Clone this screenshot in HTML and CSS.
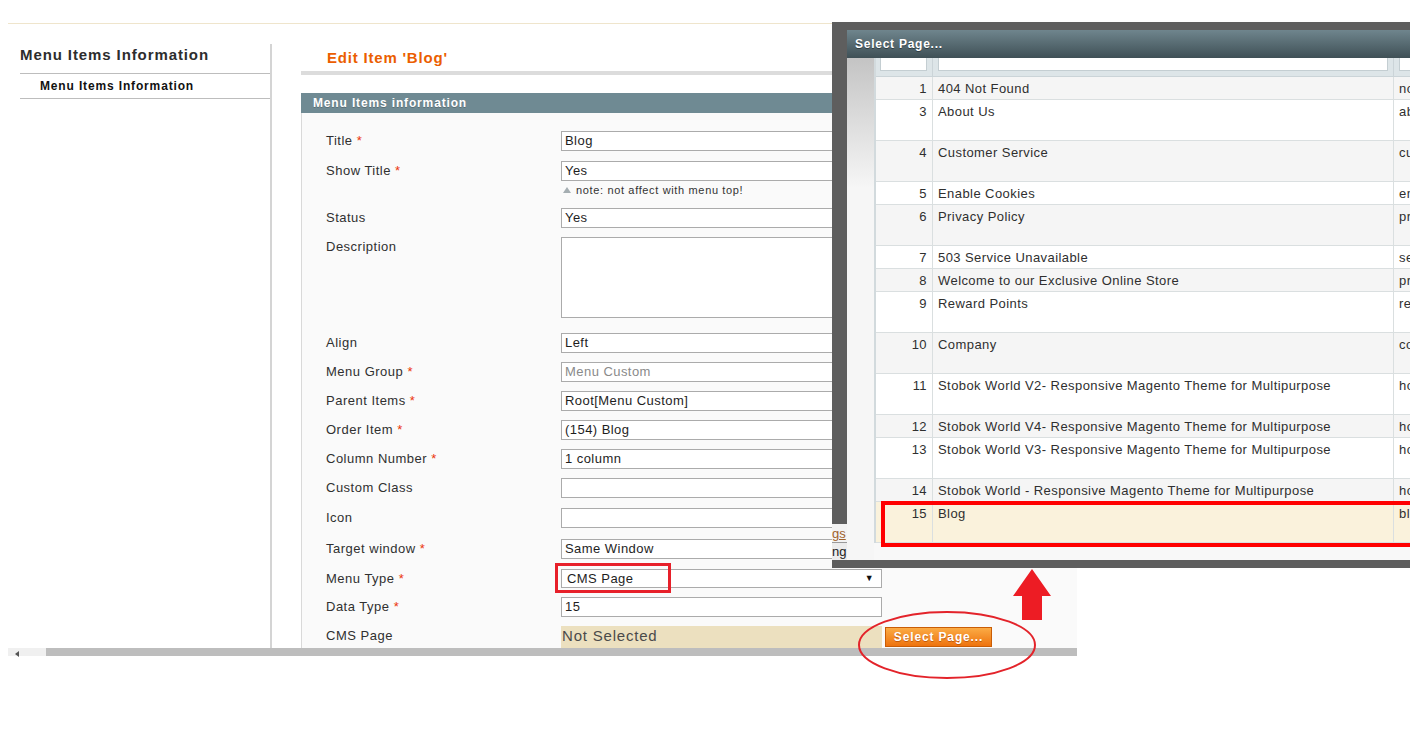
FILE: index.html
```html
<!DOCTYPE html>
<html>
<head>
<meta charset="utf-8">
<title>Edit Item 'Blog'</title>
<link rel="stylesheet" href="styles.css">
</head>
<body>
<div class="topline"></div>
<div class="layout">
  <aside class="sidebar">
    <h3 class="side-title">Menu Items Information</h3>
    <div class="side-item">Menu Items Information</div>
  </aside>
  <main class="content">
    <div class="page-head"><h2>Edit Item 'Blog'</h2></div>
    <div class="section-head">Menu Items information</div>
    <div class="fieldset">
      <div class="row gap10"><label>Title <span class="req">*</span></label><div class="field"><div class="input">Blog</div></div></div>
      <div class="row"><label>Show Title <span class="req">*</span></label><div class="field"><div class="input">Yes</div><div class="note"><span class="tri"></span>note: not affect with menu top!</div></div></div>
      <div class="row"><label>Status</label><div class="field"><div class="input">Yes</div></div></div>
      <div class="row gap15"><label>Description</label><div class="field"><div class="input area"></div></div></div>
      <div class="row"><label>Align</label><div class="field"><div class="input">Left</div></div></div>
      <div class="row"><label>Menu Group <span class="req">*</span></label><div class="field"><div class="input muted">Menu Custom</div></div></div>
      <div class="row"><label>Parent Items <span class="req">*</span></label><div class="field"><div class="input">Root[Menu Custom]</div></div></div>
      <div class="row"><label>Order Item <span class="req">*</span></label><div class="field"><div class="input">(154) Blog</div></div></div>
      <div class="row"><label>Column Number <span class="req">*</span></label><div class="field"><div class="input">1 column</div></div></div>
      <div class="row gap10"><label>Custom Class</label><div class="field"><div class="input"></div></div></div>
      <div class="row gap11"><label>Icon</label><div class="field"><div class="input"></div></div></div>
      <div class="row gap10"><label>Target window <span class="req">*</span></label><div class="field"><div class="input">Same Window</div></div></div>
      <div class="row"><label>Menu Type <span class="req">*</span></label><div class="field"><div class="input select">CMS Page<span class="caret">&#9660;</span></div></div></div>
      <div class="row"><label>Data Type <span class="req">*</span></label><div class="field"><div class="input">15</div></div></div>
      <div class="row"><label>CMS Page</label><div class="field cms"><div class="notsel">Not Selected</div><div class="btn">Select Page...</div></div></div>
    </div>
  </main>
</div>
<div class="hscroll"><div class="hs-btn"><span class="hs-tri"></span></div><div class="hs-bar"></div></div>

<div class="modal">
  <div class="modal-head">Select Page...</div>
  <div class="modal-body">
    <div class="modal-side"></div>
    <div class="grid">
      <div class="filter">
        <div class="gid"><span class="fbox"></span></div>
        <div class="gtitle"><span class="fbox"></span></div>
        <div class="gurl"><span class="fbox"></span></div>
      </div>
      <div class="grow odd"><div class="gid">1</div><div class="gtitle">404 Not Found</div><div class="gurl">no-route</div></div>
      <div class="grow tall"><div class="gid">3</div><div class="gtitle">About Us</div><div class="gurl">about-magento-demo-store</div></div>
      <div class="grow tall odd"><div class="gid">4</div><div class="gtitle">Customer Service</div><div class="gurl">customer-service</div></div>
      <div class="grow"><div class="gid">5</div><div class="gtitle">Enable Cookies</div><div class="gurl">enable-cookies</div></div>
      <div class="grow tall odd"><div class="gid">6</div><div class="gtitle">Privacy Policy</div><div class="gurl">privacy-policy-cookie-restriction-mode</div></div>
      <div class="grow"><div class="gid">7</div><div class="gtitle">503 Service Unavailable</div><div class="gurl">service-unavailable</div></div>
      <div class="grow odd"><div class="gid">8</div><div class="gtitle">Welcome to our Exclusive Online Store</div><div class="gurl">private-sales</div></div>
      <div class="grow tall"><div class="gid">9</div><div class="gtitle">Reward Points</div><div class="gurl">reward-points</div></div>
      <div class="grow tall odd"><div class="gid">10</div><div class="gtitle">Company</div><div class="gurl">company</div></div>
      <div class="grow tall"><div class="gid">11</div><div class="gtitle">Stobok World V2- Responsive Magento Theme for Multipurpose</div><div class="gurl">home-v2</div></div>
      <div class="grow odd"><div class="gid">12</div><div class="gtitle">Stobok World V4- Responsive Magento Theme for Multipurpose</div><div class="gurl">home-v4</div></div>
      <div class="grow tall"><div class="gid">13</div><div class="gtitle">Stobok World V3- Responsive Magento Theme for Multipurpose</div><div class="gurl">home-v3</div></div>
      <div class="grow odd"><div class="gid">14</div><div class="gtitle">Stobok World - Responsive Magento Theme for Multipurpose</div><div class="gurl">home</div></div>
      <div class="grow tall picked"><div class="gid">15</div><div class="gtitle">Blog</div><div class="gurl">blog</div></div>
    </div>
  </div>
</div>

<div class="peek"><div class="peek-link">gs</div><div class="peek-text">ng</div></div>
<div class="mark mark-row"></div>
<div class="mark mark-type"></div>
<svg class="arrow" width="39" height="51" viewBox="0 0 39 51"><polygon points="19,0 38,27 29,27 29,51 9,51 9,27 0,27" fill="#ed1c24"/></svg>
<svg class="ring" width="182" height="72" viewBox="0 0 182 72"><ellipse cx="91" cy="35" rx="88" ry="33" fill="none" stroke="#e3232a" stroke-width="2"/></svg>
</body>
</html>
```
FILE: styles.css
```css
* { box-sizing: border-box; }
html, body { margin: 0; padding: 0; overflow: hidden; }
body {
  width: 1410px;
  height: 754px;
  background: #fff;
  position: relative;
  font-family: "Liberation Sans", Arial, sans-serif;
  color: #2f2f2f;
}

.topline { margin: 23px 0 0 8px; height: 1px; background: #efe5cc; }

.layout { display: flex; margin: 20px 0 0 8px; height: 604px; overflow: hidden; }

.sidebar { flex: none; width: 264px; padding-left: 12px; border-right: 2px solid #d4d4d4; }
.side-title {
  margin: 0; height: 30px; border-bottom: 1px solid #bdbdbd;
  font-size: 15px; font-weight: bold; line-height: 21px; color: #2d2d2d; letter-spacing: 0.9px;
}
.side-item {
  height: 25px; padding-left: 20px; border-bottom: 1px solid #bdbdbd;
  font-size: 12px; font-weight: bold; line-height: 24px; color: #111; letter-spacing: 0.85px;
}

.content { flex: none; margin-left: 29px; width: 776px; display: flex; flex-direction: column; }
.page-head { height: 31px; border-bottom: 4px solid #dcdcdc; }
.page-head h2 {
  margin: 0; padding-left: 26px; font-size: 15px; font-weight: bold;
  line-height: 28px; color: #eb5e00; letter-spacing: 0.8px;
}
.section-head {
  margin-top: 18px; height: 20px; padding-left: 12px; background: #6f8a93;
  color: #fff; font-size: 12px; font-weight: bold; line-height: 20px; letter-spacing: 0.85px;
  text-shadow: 0 1px 0 #5a6f76;
}
.fieldset { flex: 1; background: #fafafa; border-left: 1px solid #d9d9d9; padding: 18px 0 0 24px; }

.row { display: flex; align-items: flex-start; margin-bottom: 9px; }
.row.gap10 { margin-bottom: 10px; }
.row.gap11 { margin-bottom: 11px; }
.row.gap15 { margin-bottom: 15px; }
.row label { flex: none; width: 235px; font-size: 13px; line-height: 19px; color: #303030; letter-spacing: 0.5px; }
.req { color: #eb340a; }
.field { flex: none; width: 321px; }
.input {
  position: relative; height: 20px; padding: 0 3px; background: #fff;
  border: 1px solid #ababab; font-size: 13px; line-height: 18px; color: #1e1e1e;
  white-space: nowrap; overflow: hidden; letter-spacing: 0.45px;
}
.input.muted { color: #8a8a8a; }
.input.area { height: 81px; }
.input.select { height: 19px; padding-left: 5px; line-height: 17px; }
.caret { position: absolute; right: 7px; top: 0; font-size: 9px; color: #111; }
.note { font-size: 11px; line-height: 18px; color: #333; padding-left: 2px; white-space: nowrap; letter-spacing: 0.65px; }
.tri {
  display: inline-block; width: 0; height: 0; margin-right: 5px; vertical-align: 1px;
  border-left: 4px solid transparent; border-right: 4px solid transparent; border-bottom: 6px solid #a5aeb2;
}

.field.cms { display: flex; width: auto; }
.notsel {
  width: 321px; height: 22px; background: #ece0bf; padding-left: 1px;
  font-size: 15px; line-height: 20px; color: #4a4a4a; letter-spacing: 0.8px;
}
.btn {
  margin: 1px 0 0 3px; width: 107px; height: 20px;
  border: 1px solid #c95d06; background: linear-gradient(#fbab45, #ee730e);
  color: #fff; font-size: 12px; font-weight: bold; line-height: 18px; text-align: center;
  letter-spacing: 0.85px; text-shadow: 0 1px 0 #c2590a;
}

.hscroll { display: flex; margin-left: 8px; width: 1069px; height: 8px; }
.hs-btn { position: relative; width: 38px; background: #f0f0f0; }
.hs-tri {
  position: absolute; left: 7px; top: 3px; width: 0; height: 0;
  border-right: 4px solid #555; border-top: 3px solid transparent; border-bottom: 3px solid transparent;
}
.hs-bar { flex: 1; background: #bdbdbd; }

/* popup window laid over the page */
.modal {
  position: absolute; left: 832px; top: 22px; width: 640px;
  background: #5e5e5e; padding: 8px 0 8px 15px;
}
.modal-head {
  height: 28px; padding-left: 8px; background: linear-gradient(#6f858d, #3f5056);
  color: #fff; font-size: 12px; font-weight: bold; line-height: 29px; letter-spacing: 0.75px;
  text-shadow: 0 1px 0 #2f3d42;
}
.modal-body { display: flex; height: 502px; background: #f8f8f8; }
.modal-side { flex: none; width: 27px; background: linear-gradient(#c4c4c4, #f6f6f6 130px); }
.grid { flex: none; width: 600px; border-left: 2px solid #d2dadd; align-self: flex-start; }

.filter {
  display: flex; height: 19px; background: #dde5e8; border-bottom: 1px solid #cbd4d8;
}
.filter .gid { padding: 0 5px 0 4px; border-right: 1px solid #cbd4d8; }
.filter .gtitle { padding: 0 5px 0 5px; border-right: 1px solid #cbd4d8; }
.filter .gurl { padding: 0 0 0 5px; }
.fbox { display: block; height: 13px; background: #fff; border: 1px solid #c4ced2; border-top: 0; }

.grow {
  display: flex; height: 23px; border-bottom: 1px solid #dadfe0; background: #fff;
  font-size: 13px; line-height: 15px; color: #2f2f2f; letter-spacing: 0.43px;
}
.grow.tall { height: 41px; }
.grow.odd { background: #f5f5f5; }
.grow.picked { background: #faf2dc; }
.gid {
  flex: none; width: 57px; padding: 4px 5px 0 0; text-align: right;
  border-right: 1px solid #dadfe0;
}
.gtitle {
  flex: none; width: 461px; padding: 4px 0 0 5px; border-right: 1px solid #dadfe0;
  white-space: nowrap; overflow: hidden;
}
.gurl { flex: 1; padding: 4px 0 0 5px; white-space: nowrap; overflow: hidden; }

/* bits of the page seen at the window's edge */
.peek {
  position: absolute; left: 832px; top: 524px; width: 15px; height: 36px; overflow: hidden;
  font-size: 13px; line-height: 17px; background: #f3f3f3;
}
.peek-link { color: #a0622c; text-decoration: underline; border-bottom: 1px solid #9a9a9a; padding-top: 1px; }
.peek-text { background: #ececec; color: #222; }

/* annotations */
.mark { position: absolute; }
.mark-row { left: 881px; top: 501px; width: 600px; height: 46px; border: 4px solid #ff0000; }
.mark-type { left: 555px; top: 563px; width: 116px; height: 30px; border: 3px solid #e7202a; }
.arrow { position: absolute; left: 1013px; top: 569px; }
.ring { position: absolute; left: 856px; top: 610px; }
```
